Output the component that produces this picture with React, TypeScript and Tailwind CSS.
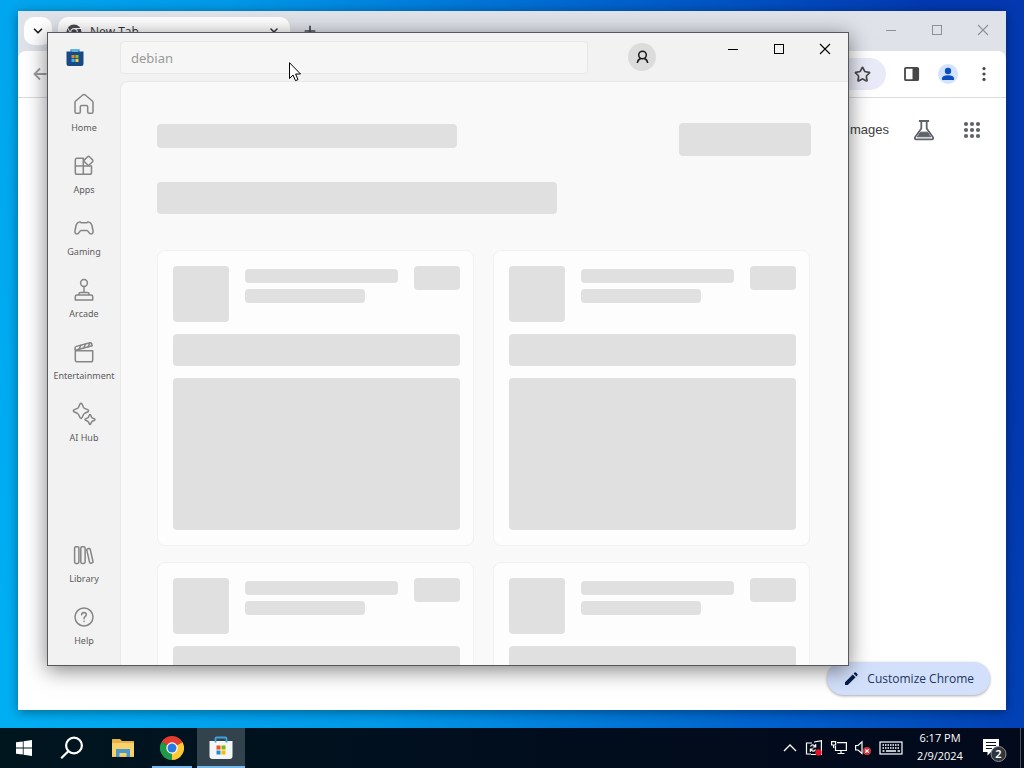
import type { ReactNode } from "react";
import { ChevronDown, Plus, Star, X } from "lucide-react";

type IconProps = { children: ReactNode };

function NavIcon({ children }: IconProps) {
  return (
    <svg width="24" height="24" viewBox="0 0 24 24" fill="none" stroke="#858585" strokeWidth="1.5" strokeLinejoin="round" strokeLinecap="round" aria-hidden="true">
      {children}
    </svg>
  );
}

const topNav = [
  {
    label: "Home",
    icon: <path d="M3 10.5Q3 9.6 3.7 9L11 2.8Q12 2 13 2.8L20.3 9Q21 9.6 21 10.5V20Q21 21.3 19.7 21.3H17Q15.7 21.3 15.7 20V15Q15.7 13.6 14.3 13.6H9.7Q8.3 13.6 8.3 15V20Q8.3 21.3 7 21.3H4.3Q3 21.3 3 20Z" />,
  },
  {
    label: "Apps",
    icon: (
      <>
        <path d="M11.3 4.3V20.3M3.3 12H19.5M11.3 4.3H5Q3.3 4.3 3.3 6V18.5Q3.3 20.3 5 20.3H17.8Q19.5 20.3 19.5 18.5V12" />
        <path d="M15.6 2.8Q16.5 2 17.4 2.8L20.6 5.9Q21.4 6.8 20.6 7.7L17.4 10.8Q16.5 11.6 15.6 10.8L12.4 7.7Q11.6 6.8 12.4 5.9Z" />
      </>
    ),
  },
  {
    label: "Gaming",
    icon: <path d="M7 6.2Q8.3 5.5 9.3 6.8H14.7Q15.7 5.5 17 6.2Q19 6.4 19.8 9L21 14.5Q21.4 17.8 19.3 18Q17.8 18 16.8 16.3Q15.8 14.6 14.6 14.6H9.4Q8.2 14.6 7.2 16.3Q6.2 18 4.7 18Q2.6 17.8 3 14.5L4.2 9Q5 6.4 7 6.2Z" />,
  },
  {
    label: "Arcade",
    icon: (
      <>
        <circle cx="12" cy="5" r="3.4" />
        <path d="M12 8.4V14.5M7 17V16Q7 14.5 8.5 14.5H15.5Q17 14.5 17 16V17M3.3 22V18.6Q3.3 17 5 17H19Q20.7 17 20.7 18.6V22Z" />
      </>
    ),
  },
  {
    label: "Entertainment",
    icon: (
      <>
        <path d="M3.3 10.8H20.7V20Q20.7 21.8 19 21.8H5Q3.3 21.8 3.3 20ZM3.3 10.8L3 8.3Q2.9 6.8 4.3 6.4L18 2.8Q19.4 2.5 19.7 3.7L20.2 5.8L3.4 10.2" />
        <path d="M9 5.2L7 9.2M13.6 4L11.6 8M18 2.9L16 6.8" />
      </>
    ),
  },
  {
    label: "AI Hub",
    icon: (
      <>
        <path d="M8 2Q9 0.5 10 2L11.5 5.3Q11.9 6 12.7 6.4L16 7.9Q17.3 8.8 16 9.8L12.7 11.3Q11.9 11.7 11.5 12.5L10 15.7Q9 17.2 8 15.7L6.5 12.5Q6.1 11.7 5.3 11.3L2 9.8Q.7 8.8 2 7.9L5.3 6.4Q6.1 6 6.5 5.3Z" />
        <path d="M17.4 13Q18 12 18.6 13L19.6 15.2Q19.8 15.7 20.3 15.9L22.5 16.9Q23.4 17.6 22.5 18.2L20.3 19.2Q19.8 19.4 19.6 19.9L18.6 22.1Q18 23 17.4 22.1L16.4 19.9Q16.2 19.4 15.7 19.2L13.5 18.2Q12.6 17.6 13.5 16.9L15.7 15.9Q16.2 15.7 16.4 15.2Z" />
      </>
    ),
  },
];

const bottomNav = [
  {
    label: "Library",
    icon: (
      <>
        <rect x="2.6" y="3.8" width="4.3" height="16.6" rx="1.3" />
        <rect x="8.8" y="3.8" width="4.3" height="16.6" rx="1.3" />
        <path d="M14.8 7.2Q14.5 6.3 15.4 6L16.9 5.5Q17.9 5.3 18.2 6.3L21 18.5Q21.2 19.5 20.2 19.8L18.8 20.2Q17.9 20.4 17.6 19.4Z" />
      </>
    ),
  },
  {
    label: "Help",
    icon: (
      <>
        <circle cx="12" cy="12" r="9" />
        <path d="M9.6 9.7Q9.7 7.4 12 7.4Q14.3 7.5 14.3 9.6Q14.2 10.9 13 11.7Q12 12.5 12 13.7M12 16.2V16.5" />
      </>
    ),
  },
];

function NavItem({ label, icon }: { label: string; icon: ReactNode }) {
  return (
    <button className="flex h-[62px] w-full flex-col items-center gap-[5px] pt-[7px]">
      <NavIcon>{icon}</NavIcon>
      <span className="text-[9px] leading-[14px] text-[#5c5c5c]">{label}</span>
    </button>
  );
}

function Bone({ className }: { className: string }) {
  return <div className={`rounded-[4px] bg-[#e0e0e0] ${className}`} />;
}

function SkeletonCard() {
  return (
    <div className="rounded-lg border border-[#f1f1f1] bg-[#fdfdfd] py-[15px] pr-[13px] pl-[15px]">
      <div className="flex items-start">
        <Bone className="size-14 shrink-0" />
        <div className="ml-4 flex flex-1 flex-col gap-1.5 pt-[3px]">
          <Bone className="h-3.5" />
          <Bone className="h-3.5 w-[120px]" />
        </div>
        <Bone className="ml-4 h-6 w-[46px]" />
      </div>
      <Bone className="mt-3 h-8" />
      <Bone className="mt-3 h-[152px]" />
    </div>
  );
}

function MinimizeGlyph() {
  return (
    <svg width="12" height="12" viewBox="0 0 12 12" fill="none" stroke="currentColor" shapeRendering="crispEdges" aria-hidden="true">
      <path d="M1 6.5H11" />
    </svg>
  );
}

function MaximizeGlyph() {
  return (
    <svg width="12" height="12" viewBox="0 0 12 12" fill="none" stroke="currentColor" shapeRendering="crispEdges" aria-hidden="true">
      <rect x="1.5" y="1.5" width="9" height="9" />
    </svg>
  );
}

function CloseGlyph() {
  return (
    <svg width="12" height="12" viewBox="0 0 12 12" fill="none" stroke="currentColor" strokeWidth="1.1" aria-hidden="true">
      <path d="M1 1L11 11M11 1L1 11" />
    </svg>
  );
}

function WindowButtons() {
  return (
    <>
      <button aria-label="Minimize" className="flex h-8 w-[46px] items-center justify-center"><MinimizeGlyph /></button>
      <button aria-label="Maximize" className="flex h-8 w-[46px] items-center justify-center"><MaximizeGlyph /></button>
      <button aria-label="Close" className="flex h-8 w-[46px] items-center justify-center"><CloseGlyph /></button>
    </>
  );
}

function ChromeWindow() {
  return (
    <section aria-label="Browser" className="absolute inset-x-[18px] top-[11px] bottom-[18px] flex flex-col bg-white shadow-[0_2px_10px_rgba(0,0,0,0.4)]">
      <div className="flex h-10 shrink-0 bg-[#dfe2e9]">
        <button aria-label="Search tabs" className="mt-1.5 ml-1.5 flex size-7 items-center justify-center rounded-[10px] bg-white text-[#202124]">
          <ChevronDown size={14} strokeWidth={3} />
        </button>
        <div className="mt-1.5 ml-1.5 flex h-[34px] w-[232px] items-center rounded-t-[10px] bg-white pr-2 pb-1 pl-2 text-[12px] text-[#303134]">
          <svg width="16" height="16" viewBox="0 0 16 16" aria-hidden="true">
            <circle cx="8" cy="8" r="7.5" fill="#474a50" />
            <path d="M8 4.5H15M5 9.8L1.6 4M11 9.8L7.6 15.6" stroke="#fff" />
            <circle cx="8" cy="8" r="3.3" fill="#474a50" stroke="#fff" strokeWidth="1.2" />
          </svg>
          <span className="ml-2 flex-1 font-['Open_Sans',sans-serif]">New Tab</span>
          <button aria-label="Close tab" className="pr-0.5"><X size={12} strokeWidth={3} /></button>
        </div>
        <button aria-label="New tab" className="ml-3 flex items-center text-[#474a50]"><Plus size={16} strokeWidth={2.6} /></button>
        <div className="ml-auto flex items-start pt-[3px] text-[#8d9094]"><WindowButtons /></div>
      </div>
      <div className="shrink-0 bg-[#dfe2e9]">
        <div className="flex h-[47px] items-center rounded-t-lg border-b border-[#dadce0] bg-white pr-3.5 pl-3.5">
          <button aria-label="Back" className="text-[#9a9c9f]">
            <svg width="16" height="16" viewBox="0 0 16 16" fill="none" stroke="currentColor" strokeWidth="1.8" aria-hidden="true">
              <path d="M14.5 8H2.5M8 2.5L2.5 8L8 13.5" />
            </svg>
          </button>
          <div className="ml-20 flex h-8 flex-1 items-center justify-end rounded-full bg-[#e9ecf8] pr-[15px] text-[#474747]">
            <button aria-label="Bookmark"><Star size={17} strokeWidth={2.4} strokeLinejoin="miter" /></button>
          </div>
          <button aria-label="Side panel" className="ml-[17px]">
            <svg width="18" height="18" viewBox="0 0 18 18" aria-hidden="true">
              <rect x="2" y="2.8" width="13.2" height="12.4" rx="1" fill="#fff" stroke="#474747" strokeWidth="1.8" />
              <path d="M9.5 3H15V15H9.5Z" fill="#474747" />
            </svg>
          </button>
          <button aria-label="Profile" className="ml-[17px]">
            <svg width="20" height="20" viewBox="0 0 20 20" aria-hidden="true">
              <circle cx="10" cy="10" r="10" fill="#d3e3fd" />
              <circle cx="10" cy="7" r="3.2" fill="#0b4fbf" />
              <path d="M4 16V14Q4.5 11.4 10 11.2Q15.5 11.4 16 14V16Z" fill="#0b4fbf" />
            </svg>
          </button>
          <button aria-label="Menu" className="ml-[18px]">
            <svg width="16" height="16" viewBox="0 0 16 16" fill="#474747" aria-hidden="true">
              <circle cx="8" cy="2.6" r="1.6" /><circle cx="8" cy="8" r="1.6" /><circle cx="8" cy="13.4" r="1.6" />
            </svg>
          </button>
        </div>
      </div>
      <div className="flex flex-1 flex-col justify-between">
        <nav className="flex items-center justify-end pt-5 pr-[22px] font-['Liberation_Sans',sans-serif] text-[13px] text-[#3c4043]">
          <a href="#images">Images</a>
          <a href="#labs" aria-label="Labs" className="ml-[23px]">
            <svg width="24" height="24" viewBox="0 0 24 24" fill="none" stroke="#5f6368" strokeWidth="1.8" strokeLinejoin="round" aria-hidden="true">
              <path d="M7 3H17M9.3 3V10.5L3.2 19Q2 21.2 4.5 21.4H19.5Q22 21.2 20.8 19L14.7 10.5V3" />
              <path d="M8.5 14.2H15.5L18.6 18.8H5.4Z" fill="#5f6368" strokeWidth="1" />
            </svg>
          </a>
          <button aria-label="Apps" className="ml-6">
            <svg width="24" height="24" viewBox="0 0 24 24" fill="#5f6368" aria-hidden="true">
              {[6, 12, 18].map((y) => [6, 12, 18].map((x) => <circle key={`${x}-${y}`} cx={x} cy={y} r="2.1" />))}
            </svg>
          </button>
        </nav>
        <div className="flex justify-end pr-4 pb-[15px]">
          <button className="flex h-[33px] items-center gap-2 rounded-full bg-[#d3e0fb] px-4 font-['Open_Sans',sans-serif] text-[12px] text-[#1c355e] shadow-[0_1px_3px_rgba(0,0,0,0.35)]">
            <svg width="16" height="16" viewBox="0 0 16 16" fill="#041e49" aria-hidden="true">
              <path d="M2 14V11.2L9.8 3.4L12.6 6.2L4.8 14ZM10.6 2.6L11.7 1.5Q12.3 1.1 12.9 1.6L14.4 3.1Q14.9 3.7 14.5 4.3L13.4 5.4Z" />
            </svg>
            Customize Chrome
          </button>
        </div>
      </div>
    </section>
  );
}

function StoreWindow() {
  return (
    <section aria-label="Store" className="absolute top-8 left-[47px] flex h-[634px] w-[802px] flex-col overflow-hidden border border-[#55585c] bg-[#f2f2f2] shadow-[0_4px_20px_rgba(0,0,0,0.5)]">
      <header className="flex h-12 shrink-0 items-start">
        <div className="flex h-12 w-[72px] items-center pt-px pl-[18px]">
          <svg width="18" height="18" viewBox="0 0 18 18" aria-hidden="true">
            <path d="M5 4V1H13V4" fill="none" stroke="#2aa7e8" strokeWidth="1.4" />
            <path d="M.5 2.5H17.5V15Q17.5 17 15.5 17H2.5Q.5 17 .5 15Z" fill="#174a86" />
            <path d="M5.5 6H8.6V9.1H5.5Z" fill="#e8803a" />
            <path d="M9.4 6H12.5V9.1H9.4Z" fill="#8fc01c" />
            <path d="M5.5 9.9H8.6V13H5.5Z" fill="#35b5ee" />
            <path d="M9.4 9.9H12.5V13H9.4Z" fill="#ffc933" />
          </svg>
        </div>
        <input aria-label="Search" defaultValue="debian" className="mt-2 h-[33px] w-[468px] rounded-[4px] border border-[#e8e8e8] bg-[#f6f6f6] px-2.5 text-[13px] text-[#999999] outline-none" />
        <button aria-label="Account" className="mt-2.5 ml-10 flex size-7 items-center justify-center rounded-full bg-[#dcdcdc]">
          <svg width="16" height="16" viewBox="0 0 16 16" fill="none" stroke="#1a1a1a" strokeWidth="1.5" aria-hidden="true">
            <circle cx="8.5" cy="6" r="3.8" />
            <path d="M3.3 14Q3.8 10.5 6.7 9.5M13.7 14Q13.2 10.5 10.3 9.5" />
          </svg>
        </button>
        <div className="ml-auto flex text-black"><WindowButtons /></div>
      </header>
      <div className="flex min-h-0 flex-1">
        <nav className="flex w-[72px] shrink-0 flex-col justify-between pt-1 pb-[5px]">
          <div>{topNav.map((item) => <NavItem key={item.label} {...item} />)}</div>
          <div>{bottomNav.map((item) => <NavItem key={item.label} {...item} />)}</div>
        </nav>
        <main className="flex-1 overflow-hidden rounded-tl-lg border-t border-l border-[#e9e9e9] bg-[#f9f9f9] pt-[41px] pr-[37px] pl-9">
          <div className="flex items-start justify-between">
            <Bone className="mt-px h-6 w-[300px]" />
            <Bone className="h-[33px] w-[132px]" />
          </div>
          <Bone className="mt-[26px] h-8 w-[400px]" />
          <div className="mt-9 mr-px grid grid-cols-2 gap-x-[19px] gap-y-4">
            <SkeletonCard />
            <SkeletonCard />
            <SkeletonCard />
            <SkeletonCard />
          </div>
        </main>
      </div>
    </section>
  );
}

function Taskbar() {
  return (
    <footer className="flex h-10 shrink-0 items-stretch bg-[linear-gradient(90deg,#00161f,#010c1d_60%,#020a1c)] text-white">
      <button aria-label="Start" className="flex w-12 items-center justify-center">
        <svg width="16" height="16" viewBox="0 0 16 16" fill="#fff" aria-hidden="true">
          <path d="M0 2.3L6.8 1.4V7.5H0ZM7.6 1.3L16 0V7.5H7.6ZM0 8.4H6.8V14.6L0 13.7ZM7.6 8.4H16V16L7.6 14.8Z" />
        </svg>
      </button>
      <button aria-label="Search" className="flex w-12 items-center justify-center">
        <svg width="24" height="24" viewBox="0 0 24 24" fill="none" stroke="#fff" strokeWidth="2.2" aria-hidden="true">
          <circle cx="14" cy="9.5" r="7.9" />
          <path d="M8.3 15.2L1.2 22.3" />
        </svg>
      </button>
      <button aria-label="File Explorer" className="ml-[3px] flex w-12 items-center justify-center">
        <svg width="22" height="20" viewBox="0 0 22 20" aria-hidden="true">
          <path d="M0 1.5Q0 1 .5 1H8L10 3H21.5Q22 3 22 3.5V19H0Z" fill="#e8b24a" />
          <path d="M0 5H22V18.5H0Z" fill="#fad26c" />
          <path d="M4 11H18V19H14.5V15H7.5V19H4Z" fill="#4a98cc" />
        </svg>
      </button>
      <button aria-label="Chrome" className="ml-px flex w-12 flex-col items-center">
        <span className="flex flex-1 items-center pt-0.5">
          <svg width="24" height="24" viewBox="0 0 24 24" aria-hidden="true">
            <path d="M12 12L1.6 6A12 12 0 0 1 22.4 6Z" fill="#e33b2e" />
            <path d="M12 12L22.4 6A12 12 0 0 1 12 24Z" fill="#fcc934" />
            <path d="M12 12L12 24A12 12 0 0 1 1.6 6Z" fill="#1e9948" />
            <path d="M12 6H22.4L12 12Z" fill="#e33b2e" />
            <path d="M17.2 15L12 24L12 12Z" fill="#fcc934" />
            <path d="M6.8 15L1.6 6L12 12Z" fill="#1e9948" />
            <circle cx="12" cy="12" r="5.7" fill="#fff" />
            <circle cx="12" cy="12" r="4.5" fill="#2a78e4" />
          </svg>
        </span>
        <span className="h-0.5 w-10 bg-[#76b9ed]" />
      </button>
      <button aria-label="Store" className="ml-px flex w-12 flex-col items-center bg-[#33434d]">
        <span className="flex flex-1 items-center pt-0.5">
          <svg width="24" height="24" viewBox="0 0 24 24" aria-hidden="true">
            <path d="M.5 5H23.5V20Q23.5 23 20.5 23H3.5Q.5 23 .5 20Z" fill="#f3f5f6" />
            <path d="M6.5 6.5V2.5Q6.5 1.5 7.5 1.5H16.5Q17.5 1.5 17.5 2.5V6.5" fill="none" stroke="#3fa4dc" strokeWidth="1.8" />
            <path d="M7.5 9.5H11.5V13.5H7.5Z" fill="#f25022" />
            <path d="M12.5 9.5H16.5V13.5H12.5Z" fill="#7fba00" />
            <path d="M7.5 14.5H11.5V18.5H7.5Z" fill="#1a8fd8" />
            <path d="M12.5 14.5H16.5V18.5H12.5Z" fill="#ffb900" />
          </svg>
        </span>
        <span className="h-0.5 w-full bg-[#76b9ed]" />
      </button>
      <div className="ml-auto flex items-center">
        <button aria-label="Show hidden icons" className="mr-2">
          <svg width="14" height="16" viewBox="0 0 14 16" fill="none" stroke="#fff" strokeWidth="1.3" aria-hidden="true"><path d="M1 11L7 5L13 11" /></svg>
        </button>
        <button aria-label="Update status" className="mr-2">
          <svg width="18" height="16" viewBox="0 0 18 16" fill="none" stroke="#fff" strokeWidth="1.2" aria-hidden="true">
            <path d="M6 14H1.5V3H7M9 2L16.4 .7V14.5H6" />
            <path d="M5.5 6.5Q6.5 4.5 8.5 5L10.5 6.5M10.7 4V7H7.7M10.5 9.5Q9.5 11.7 7.5 11L5.5 9.5M5.3 12V9H8.3" strokeWidth="1.1" />
            <circle cx="13.5" cy="12.5" r="3.2" fill="#e81123" stroke="none" />
          </svg>
        </button>
        <button aria-label="Network" className="mr-2">
          <svg width="16" height="16" viewBox="0 0 16 16" fill="none" stroke="#fff" strokeWidth="1.2" aria-hidden="true">
            <path d="M6 2.6H15.4V10.5H4.5V6M10 10.5V13.5M6.5 13.5H13.5M.6 1.6H4.6V5H.6ZM2.6 5V8" />
          </svg>
        </button>
        <button aria-label="Volume muted" className="mr-2">
          <svg width="16" height="16" viewBox="0 0 16 16" fill="none" stroke="#fff" strokeWidth="1.2" aria-hidden="true">
            <path d="M.6 5.5H3L7 1.8V13.5L3 10H.6Z" />
            <circle cx="12" cy="11" r="4" fill="#d13438" stroke="none" />
            <path d="M10.3 9.3L13.7 12.7M13.7 9.3L10.3 12.7" />
          </svg>
        </button>
        <button aria-label="Touch keyboard" className="mr-3.5">
          <svg width="24" height="14" viewBox="0 0 24 14" fill="none" stroke="#fff" strokeWidth="1.2" aria-hidden="true">
            <rect x="1" y="1" width="22" height="12" />
            <path d="M3.5 4H21M3.5 7H21" strokeWidth="1.5" strokeDasharray="1.5 1" />
            <path d="M3.5 10H5.5M7 10H17M18.5 10H21" strokeWidth="1.4" />
          </svg>
        </button>
        <div className="mr-5 flex w-[46px] flex-col items-center pb-0.5 font-['Open_Sans',sans-serif] text-[11px] leading-[18px] whitespace-nowrap">
          <div>6:17 PM</div>
          <div>2/9/2024</div>
        </div>
        <button aria-label="Notifications, 2 new" className="mr-[9px]">
          <svg width="28" height="28" viewBox="0 0 28 28" aria-hidden="true">
            <path d="M0 5H16V18H8L4.5 21.5V18H0Z" fill="#fff" />
            <path d="M3 8.5H13M3 11.5H13M3 14.5H9" stroke="#0a1220" strokeWidth="1.2" />
            <circle cx="15.5" cy="20" r="7.5" fill="#30353c" stroke="#8d9196" />
            <text x="15.5" y="24" textAnchor="middle" fontSize="11" fontWeight="600" fill="#fff">2</text>
          </svg>
        </button>
        <div className="mr-[3px] h-10 w-px bg-[#4a525e]" />
      </div>
    </footer>
  );
}

function Cursor() {
  return (
    <svg className="pointer-events-none absolute top-[62px] left-[289px]" width="13" height="20" viewBox="0 0 13 20" aria-hidden="true">
      <path d="M.5 .7V16.5L4 13L6.5 18.7L9 17.6L6.6 12H11.5Z" fill="#fff" stroke="#000" />
    </svg>
  );
}

export default function App() {
  return (
    <div className="flex h-screen flex-col overflow-hidden bg-[linear-gradient(78deg,#00b0f3,#0098e8_33%,#0064ce_64%,#0338b0_92%)] font-['Noto_Sans',sans-serif]">
      <div className="relative min-h-0 flex-1">
        <ChromeWindow />
        <StoreWindow />
        <Cursor />
      </div>
      <Taskbar />
    </div>
  );
}
